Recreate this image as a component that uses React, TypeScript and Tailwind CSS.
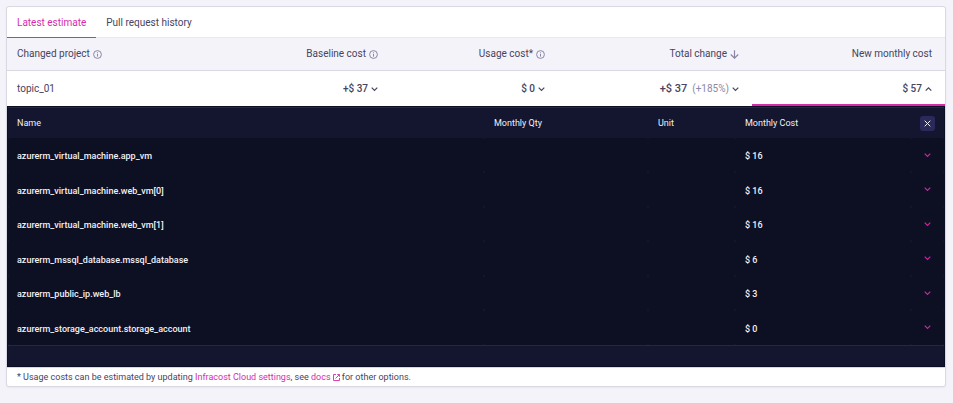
import type { ReactNode } from "react";

const resources = [
  { name: "azurerm_virtual_machine.app_vm", cost: 16 },
  { name: "azurerm_virtual_machine.web_vm[0]", cost: 16 },
  { name: "azurerm_virtual_machine.web_vm[1]", cost: 16 },
  { name: "azurerm_mssql_database.mssql_database", cost: 6 },
  { name: "azurerm_public_ip.web_lb", cost: 3 },
  { name: "azurerm_storage_account.storage_account", cost: 0 },
];

function InfoIcon() {
  return (
    <svg className="size-[9px] shrink-0" viewBox="0 0 9 9" fill="none" stroke="#8886a6" aria-hidden="true">
      <circle cx="4.5" cy="4.5" r="3.9" strokeWidth="1" />
      <path d="M4.5 4v2.6M4.5 2.3v1" strokeWidth="1" />
    </svg>
  );
}

function Chevron({ up = false }: { up?: boolean }) {
  return (
    <svg className="size-[7px] shrink-0" viewBox="0 0 7 7" fill="none" stroke="currentColor" strokeWidth="1.2" aria-hidden="true">
      <path d={up ? "M0.7 5.7 3.5 2.9 6.3 5.7" : "M0.7 2.7 3.5 5.5 6.3 2.7"} />
    </svg>
  );
}

function HeadLabel({ children }: { children: ReactNode }) {
  return <span className="flex items-center justify-end gap-[3px]">{children}</span>;
}

function CostButton({ amount, note, open = false }: { amount: string; note?: string; open?: boolean }) {
  return (
    <button type="button" aria-expanded={open} className="inline-flex items-center gap-[3px] font-medium">
      <span className={note ? "text-[11px]" : ""}>{amount}</span>
      {note && <span className="ml-0.5 font-normal text-[#8b89a8]">{note}</span>}
      <Chevron up={open} />
    </button>
  );
}

export default function App() {
  return (
    <main className="min-h-screen bg-[#f4f3f9] px-[6px] pt-[6px] pr-[7px] font-['Roboto',sans-serif] text-[10px] leading-4 text-[#46445f]">
      <section className="overflow-hidden rounded-[3px] border border-[#d9d8e3] bg-white shadow-xs">
        <nav className="flex h-[31px] border-b border-[#e9e8ef]">
          <button type="button" className="-mb-px border-b border-[#d62cae] px-[10px] pt-0.5 text-[#d62cae]">
            Latest estimate
          </button>
          <button type="button" className="px-[10px] pt-px">
            Pull request history
          </button>
        </nav>

        <table className="w-full table-fixed border-separate border-spacing-0">
          <thead className="bg-[#f4f3f9]">
            <tr className="h-[33px]">
              <th className="border-b border-[#d9d8e3] px-[10px] text-left font-normal">
                <span className="flex items-center gap-[3px]">
                  Changed project <InfoIcon />
                </span>
              </th>
              <th className="w-[167px] border-b border-[#d9d8e3] px-[13px] font-normal">
                <HeadLabel>
                  Baseline cost <InfoIcon />
                </HeadLabel>
              </th>
              <th className="w-[167px] border-b border-[#d9d8e3] px-[13px] font-normal">
                <HeadLabel>
                  Usage cost* <InfoIcon />
                </HeadLabel>
              </th>
              <th className="w-[194px] border-b border-[#d9d8e3] px-[13px] font-normal">
                <HeadLabel>
                  Total change
                  <svg className="size-[9px] shrink-0" viewBox="0 0 9 9" fill="none" stroke="#8886a6" strokeWidth="1.2" aria-hidden="true">
                    <path d="M4.5 0.3v7.8M0.8 4.5l3.7 3.7 3.7-3.7" />
                  </svg>
                </HeadLabel>
              </th>
              <th className="w-[193px] border-b border-[#d9d8e3] px-[13px] text-right font-normal">New monthly cost</th>
            </tr>
          </thead>
          <tbody>
            <tr className="h-[35px]">
              <td className="px-[10px]">topic_01</td>
              <td className="px-[13px] text-right">
                <CostButton amount="+$ 37" />
              </td>
              <td className="px-[13px] text-right">
                <CostButton amount="$ 0" />
              </td>
              <td className="px-[13px] text-right">
                <CostButton amount="+$ 37" note="(+185%)" />
              </td>
              <td className="px-[13px] text-right shadow-[inset_0_-2px_0_#d62cae]">
                <CostButton amount="$ 57" open />
              </td>
            </tr>
          </tbody>
        </table>

        <div className="border border-[#0d0f22] bg-[#14152f] text-[9px] text-[#f1f1f6]">
          <table className="w-full table-fixed border-separate border-spacing-0 border-t border-[#24264f]">
            <thead>
              <tr className="h-[30px] text-left">
                <th className="px-[9px] font-normal">Name</th>
                <th className="w-[164px] px-[10px] font-normal">Monthly Qty</th>
                <th className="w-[87px] px-[10px] font-normal">Unit</th>
                <th className="w-[176px] px-[10px] font-normal">Monthly Cost</th>
                <th className="w-[33px] p-0">
                  <button type="button" aria-label="Close" className="mx-auto flex size-[15px] items-center justify-center rounded-[3px] bg-[#292a59]">
                    <svg className="size-[7px]" viewBox="0 0 7 7" stroke="currentColor" aria-hidden="true">
                      <path d="m0.7 0.7 5.6 5.6M6.3 0.7 0.7 6.3" />
                    </svg>
                  </button>
                </th>
              </tr>
            </thead>
            <tbody>
              {resources.map((resource) => (
                <tr key={resource.name} className="h-[34px] font-medium even:h-[35px]">
                  <td className="rounded-[3px] bg-[#0d0f22] px-[9px] pt-0.5">{resource.name}</td>
                  <td className="rounded-[3px] bg-[#0d0f22]" />
                  <td className="rounded-[3px] bg-[#0d0f22]" />
                  <td className="rounded-[3px] bg-[#0d0f22] px-[10px] pt-0.5">$ {resource.cost}</td>
                  <td className="rounded-[3px] bg-[#0d0f22] px-0 pt-0 pb-0.5">
                    <button type="button" aria-label={`Expand ${resource.name}`} className="mx-auto flex text-[#c727a3]">
                      <Chevron />
                    </button>
                  </td>
                </tr>
              ))}
            </tbody>
          </table>
          <div className="h-[21px] border-t border-[#24264f]" />
        </div>

        <p className="border-t border-[#d9d8e3] px-[10px] pt-px pb-px text-[9px] leading-4">
          * Usage costs can be estimated by updating{" "}
          <a href="#settings" className="text-[#d62cae]">
            Infracost Cloud settings
          </a>
          , see{" "}
          <a href="#docs" className="text-[#d62cae]">
            docs
            <svg className="ml-0.5 inline size-[7px] align-[-1px]" viewBox="0 0 7 7" fill="none" stroke="currentColor" strokeWidth="0.9" aria-hidden="true">
              <path d="M3 0.5H0.5v6h6V4M4.2 0.5h2.3v2.3M6.4 0.6 2.5 4.5" />
            </svg>
          </a>{" "}
          for other options.
        </p>
      </section>
    </main>
  );
}
